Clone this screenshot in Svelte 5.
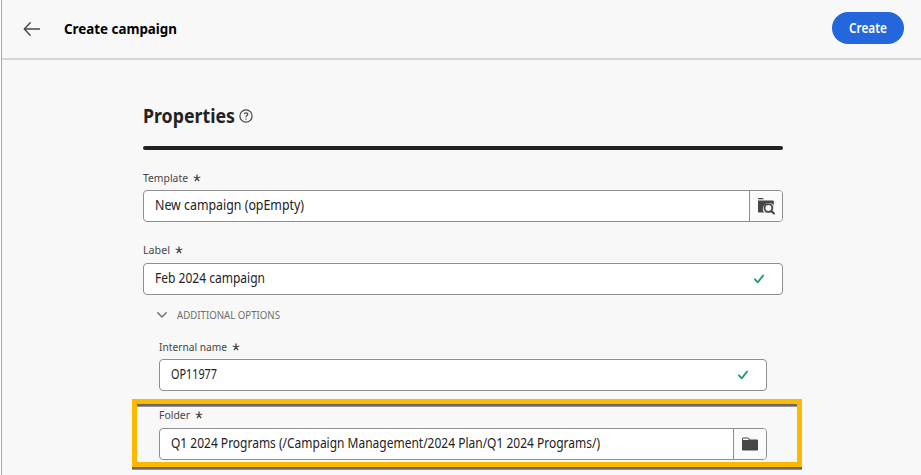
<script>
  const rows = [
    { label: 'Template', lw: 45, value: 'New campaign (opEmpty)', vw: 149, icon: 'search' },
    { label: 'Label', lw: 27, value: 'Feb 2024 campaign', vw: 110, icon: 'check' }
  ];
  const details = [
    { label: 'Internal name', lw: 68, value: 'OP11977', vw: 46, icon: 'check' },
    { label: 'Folder', lw: 31, value: 'Q1 2024 Programs (/Campaign Management/2024 Plan/Q1 2024 Programs/)', vw: 429, icon: 'folder' }
  ];
</script>

{#snippet fit(text, width, kind)}
  <svg class="fit {kind}" {width} height="20" aria-label={text}>
    <text x="0" y="15" textLength={width} lengthAdjust="spacingAndGlyphs">{text}</text>
  </svg>
{/snippet}

{#snippet field(f)}
  <div class="field">
    <div class="label">
      {@render fit(f.label, f.lw, 'small')}
      <svg class="star" width="8" height="8" viewBox="0 0 8 8"><path d="M4 4V.5M4 4L.7 3M4 4l3.3-1M4 4L2 7.2M4 4l2 3.2" /></svg>
    </div>
    <div class="box">
      <div class="value">{@render fit(f.value, f.vw, 'body')}</div>
      {#if f.icon === 'check'}
        <svg class="check" width="12" height="12" viewBox="0 0 12 12"><path d="M2 6.3l2.7 3L10 2.6" /></svg>
      {:else}
        <div class="picker">
          {#if f.icon === 'search'}
            <svg width="18" height="18" viewBox="0 0 18 18">
              <path d="M1 1.700q0-.7.7-.7h3.800q.5 0 .8.4l.7.9H1zM1 3.600h15q.8 0 .8.8v11H1.600q-.6 0-.6-.6z" fill="#464646" />
              <path d="M7 15.500a5.600 5.600 0 1 1 9.900-7v7z" fill="#fafafa" />
              <circle cx="11.400" cy="11" r="3.900" fill="#fafafa" stroke="#464646" stroke-width="1.800" />
              <path d="M14.300 13.900l2.600 2.500" stroke="#464646" stroke-width="2.100" stroke-linecap="round" />
            </svg>
          {:else}
            <svg width="18" height="18" viewBox="0 0 18 18">
              <path d="M1 4q0-1.500 1.300-1.500h4.200q.7 0 1.100.5L9.100 4.600H16q1 0 1 1v9.200q0 .7-.7.7H1.700Q1 15.500 1 14.800z" fill="#464646" />
              <path d="M2 5V4q0-.6.5-.6h3.900q.3 0 .6.300L8.200 5z" fill="#fff" />
            </svg>
          {/if}
        </div>
      {/if}
    </div>
  </div>
{/snippet}

<div class="page">
  <header>
    <svg class="back" width="18" height="16" viewBox="0 0 18 16"><path d="M16.500 8H1.500M7.200 1.800L1.300 8l5.900 6.200" /></svg>
    {@render fit('Create campaign', 113, 'title')}
    <button>{@render fit('Create', 38, 'action')}</button>
  </header>
  <main>
    <div class="heading">
      {@render fit('Properties', 92, 'h2')}
      <svg class="help" width="14" height="14" viewBox="0 0 14 14">
        <circle cx="7" cy="7" r="6.100" />
        <path d="M5.200 5.200c.3-1.900 3.700-1.800 3.600.1C8.800 6.600 7 6.500 7 8.200M7 9.500v1.200" />
      </svg>
    </div>
    <div class="rule"></div>
    {#each rows as f}{@render field(f)}{/each}
    <div class="toggle">
      <svg class="chev" width="12" height="8" viewBox="0 0 12 8"><path d="M1.800 1.800L6 6l4.200-4.200" /></svg>
      {@render fit('ADDITIONAL OPTIONS', 103, 'small muted')}
    </div>
    <div class="nested">
      {#each details as f}{@render field(f)}{/each}
    </div>
  </main>
  <div class="highlight"></div>
</div>

<style>
  :global(body) { background: #f8f8f8; overflow: hidden; }
  .page {
    position: relative; box-sizing: border-box; width: 921px; height: 475px; overflow: hidden;
    border-left: 1px solid #fff; background: #f8f8f8;
    font-family: 'Noto Sans', 'Open Sans', sans-serif;
    box-shadow: inset 1px 0 #a9a9a9;
  }
  svg { display: block; flex: none; fill: none; }
  .fit { overflow: visible; }
  .fit text { fill: #222; font-size: 13.5px; }
  .title text { fill: #000; font-size: 15px; font-weight: 700; }
  .action text { fill: #fff; font-size: 13.5px; font-weight: 600; }
  .h2 text { font-size: 19.500px; font-weight: 700; }
  .small text { fill: #464646; font-size: 11px; }
  .muted text { fill: #6e6e6e; }
  header {
    display: flex; align-items: center; box-sizing: border-box; height: 60px; margin-left: 1px;
    padding: 0 17px 2px 21px; border-bottom: 2px solid #d5d5d5;
  }
  .back { stroke: #464646; stroke-width: 1.400; stroke-linecap: round; stroke-linejoin: round; margin: 1px 23px 0 0; }
  header > .title { margin-top: 2px; }
  button {
    display: flex; justify-content: center; align-items: center; width: 72px; height: 32px; margin-left: auto;
    padding: 0; border: 0; border-radius: 16px; background: #2466dc; font-family: inherit;
  }
  main { width: 640px; margin-left: 142px; padding-top: 48px; }
  .heading { display: flex; height: 38px; }
  .help { margin: 1px 0 0 4px; stroke: #464646; stroke-width: 1.200; }
  .rule { height: 4px; border-radius: 2px; background: #222; margin-bottom: 17px; }
  .field { margin-bottom: 10px; }
  .label { display: flex; height: 23px; gap: 5px; }
  .field + .field .label { height: 24px; }
  .star { margin-top: 7px; stroke: #464646; stroke-width: 1.300; }
  .box {
    display: flex; align-items: center; box-sizing: border-box; height: 32px; overflow: hidden;
    border: 1px solid #8e8e8e; border-radius: 4px; background: #fff;
  }
  .value { flex: 1; padding-left: 11px; height: 20px; margin-top: -2px; }
  .check { margin-right: 17px; stroke: #2d9d78; stroke-width: 2; stroke-linecap: round; stroke-linejoin: round; }
  .picker {
    display: flex; align-items: center; justify-content: center; width: 32px; height: 30px;
    border-left: 1px solid #8e8e8e; background: #fafafa;
  }
  main > .field + .field { margin-top: 17px; }
  .toggle { display: flex; align-items: flex-start; height: 32px; margin-top: -1px; padding-left: 13px; gap: 9px; }
  .chev { margin-top: 7px; stroke: #747474; stroke-width: 1.600; stroke-linecap: round; stroke-linejoin: round; }
  .nested { padding: 0 16px; }
  .nested .field { margin-bottom: 13px; }
  .highlight {
    position: absolute; left: 131px; top: 399px; box-sizing: border-box; width: 670px; height: 68px;
    border: 5px solid #fdb900; filter: drop-shadow(0 2px 0 #686868) drop-shadow(.5px 1px .7px #5559);
  }
</style>
